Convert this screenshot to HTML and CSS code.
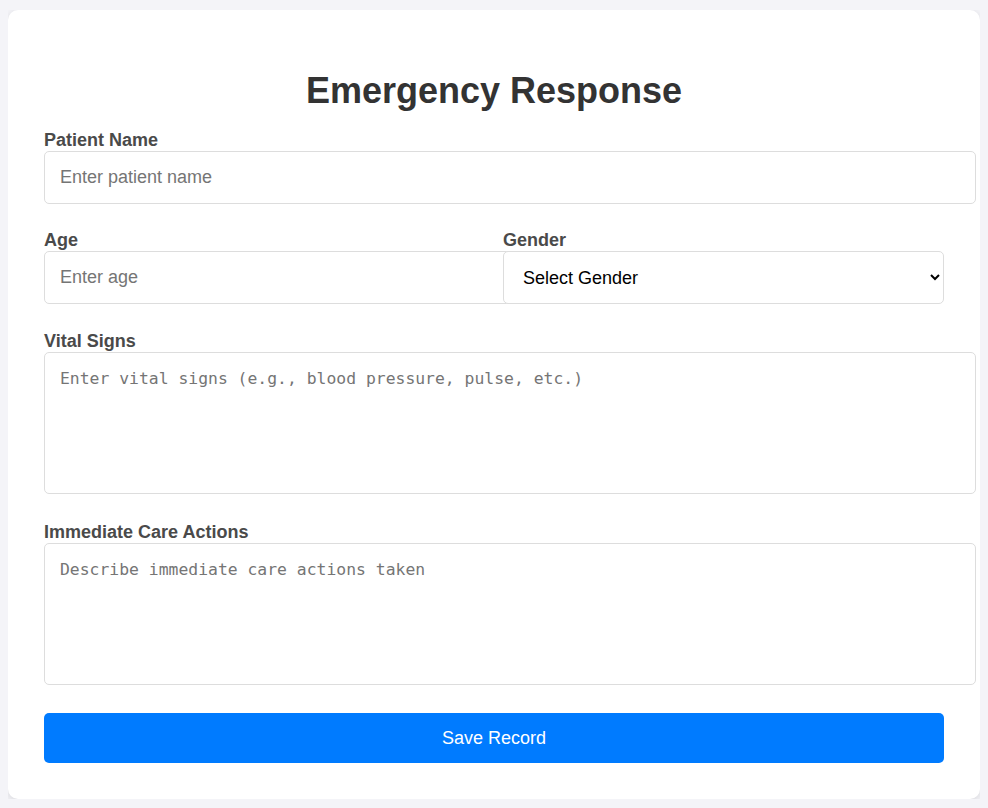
FILE: index.html
```html
<!DOCTYPE html>
<html lang="en">
<head>
<meta charset="utf-8">
<title>Emergency Response</title>
<link rel="stylesheet" href="styles.css">
</head>
<body>
<div class="card">
  <h1 class="title">Emergency Response</h1>
  <form class="form">
    <div class="group">
      <label class="label" for="name">Patient Name</label>
      <input class="control" id="name" type="text" placeholder="Enter patient name">
    </div>
    <div class="row group-wide">
      <div class="col">
        <label class="label" for="age">Age</label>
        <input class="control" id="age" type="number" placeholder="Enter age">
      </div>
      <div class="col">
        <label class="label" for="gender">Gender</label>
        <select class="select" id="gender">
          <option>Select Gender</option>
          <option>Male</option>
          <option>Female</option>
          <option>Other</option>
        </select>
      </div>
    </div>
    <div class="group-wider">
      <label class="label" for="vitals">Vital Signs</label>
      <textarea class="control area" id="vitals" placeholder="Enter vital signs (e.g., blood pressure, pulse, etc.)"></textarea>
    </div>
    <div>
      <label class="label" for="care">Immediate Care Actions</label>
      <textarea class="control area" id="care" placeholder="Describe immediate care actions taken"></textarea>
    </div>
    <button class="btn" type="button">Save Record</button>
  </form>
</div>
</body>
</html>
```
FILE: styles.css
```css
html, body {
  background: #f4f4f8;
}
body {
  margin: 10px 8px 8px;
  font-family: "Liberation Sans", Arial, sans-serif;
  color: #333;
}
.card {
  background: #fff;
  border-radius: 10px;
  box-shadow: 0 2px 8px rgba(0, 0, 0, 0.12);
  padding: 36px;
}
.title {
  margin: 24px 0 18px;
  font-size: 36px;
  font-weight: bold;
  text-align: center;
  color: #333;
  line-height: normal;
}
.group {
  margin-bottom: 26px;
}
.group-wide {
  margin-bottom: 27px;
}
.group-wider {
  margin-bottom: 28px;
}
.label {
  display: block;
  font-size: 18px;
  font-weight: bold;
  color: #4a4a4a;
  margin-bottom: 0;
}
.control {
  display: block;
  width: 100%;
  padding: 15px;
  border: 1px solid #ddd;
  border-radius: 5px;
  font-family: "Liberation Sans", Arial, sans-serif;
  font-size: 18px;
  color: #333;
  background: #fff;
  margin: 0;
  outline: none;
}
.control::placeholder {
  color: #757575;
}
.area {
  height: 110px;
  resize: none;
  font-family: "DejaVu Sans Mono", "Liberation Mono", monospace;
  font-size: 16.4px;
  line-height: 22px;
}
.row {
  display: flex;
  justify-content: space-between;
}
.col {
  width: 49%;
}
.select {
  display: block;
  width: 100%;
  box-sizing: border-box;
  height: 53px;
  padding: 0 14px 0 15px;
  border: 1px solid #ddd;
  border-radius: 5px;
  font-family: "Liberation Sans", Arial, sans-serif;
  font-size: 18px;
  color: #000;
  background: #fff;
  margin: 0;
  position: relative;
}
.btn {
  display: block;
  width: 100%;
  height: 50px;
  margin-top: 28px;
  border: none;
  border-radius: 5px;
  background: #007bff;
  color: #fff;
  font-family: "Liberation Sans", Arial, sans-serif;
  font-size: 18px;
  cursor: pointer;
}
```
